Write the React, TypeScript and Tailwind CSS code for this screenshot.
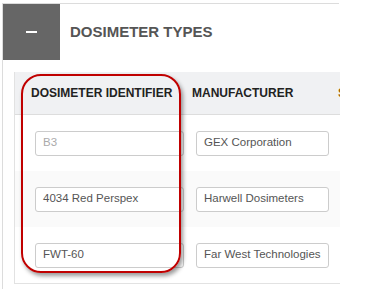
import React from "react";

const rows = [
  { id: "B3", man: "GEX Corporation", bg: "bg-white", disabled: true },
  { id: "4034 Red Perspex", man: "Harwell Dosimeters", bg: "bg-[#fafafa]", disabled: false },
  { id: "FWT-60", man: "Far West Technologies", bg: "bg-white", disabled: false },
];

export default function App() {
  return (
    <div
      className="relative w-[367px] h-[296px] overflow-hidden bg-white"
      style={{ fontFamily: '"Liberation Sans", Arial, sans-serif' }}
    >
      <div className="ml-[2px] mt-[3px] w-[337px] border-l border-t border-[#dcdcdc] pb-[5px]">
        <div className="flex items-center">
          <div className="flex h-[56px] w-[57px] items-center justify-center bg-[#666666]">
            <div className="h-[2px] w-[11px] bg-white" />
          </div>
          <div className="ml-[10px] text-[15px] font-bold text-[#555555]">DOSIMETER TYPES</div>
        </div>
        <div className="ml-[11px] mt-[12px] w-[326px] overflow-hidden border-l border-b border-[#e2e2e2]">
          <div className="flex h-[43px] items-center border-b border-[#dddddd] bg-[#f0f1f3] text-[12px] font-bold whitespace-nowrap text-[#222222]">
            <div className="w-[161px] shrink-0 pl-[16px]">DOSIMETER IDENTIFIER</div>
            <div className="w-[161px] shrink-0 pl-[16px]">MANUFACTURER</div>
            <div className="shrink-0 pl-[1px] text-[#a0620a]">S</div>
          </div>
          {rows.map((r) => (
            <div key={r.id} className={`flex h-[56px] items-center gap-[12px] pl-[20px] ${r.bg}`}>
              <div
                className={`flex h-[25px] w-[149px] shrink-0 items-center rounded-[3px] border border-[#cccccc] bg-white pl-[7px] text-[11.5px] ${
                  r.disabled ? "text-[#aaaaaa]" : "text-[#555555]"
                }`}
              >
                {r.id}
              </div>
              <div className="flex h-[25px] w-[133px] shrink-0 items-center whitespace-nowrap rounded-[3px] border border-[#cccccc] bg-white pl-[7px] text-[11.5px] text-[#555555]">
                {r.man}
              </div>
              <div className="h-[25px] w-[100px] shrink-0 rounded-[3px] border border-[#cccccc] bg-white" />
            </div>
          ))}
        </div>
      </div>
      <div
        className="absolute left-[21px] top-[74px] h-[199px] w-[160px] rounded-[20px] border-2 border-[#c00000]"
        style={{ boxShadow: "2px 3px 4px rgba(0,0,0,0.4)" }}
      />
    </div>
  );
}
